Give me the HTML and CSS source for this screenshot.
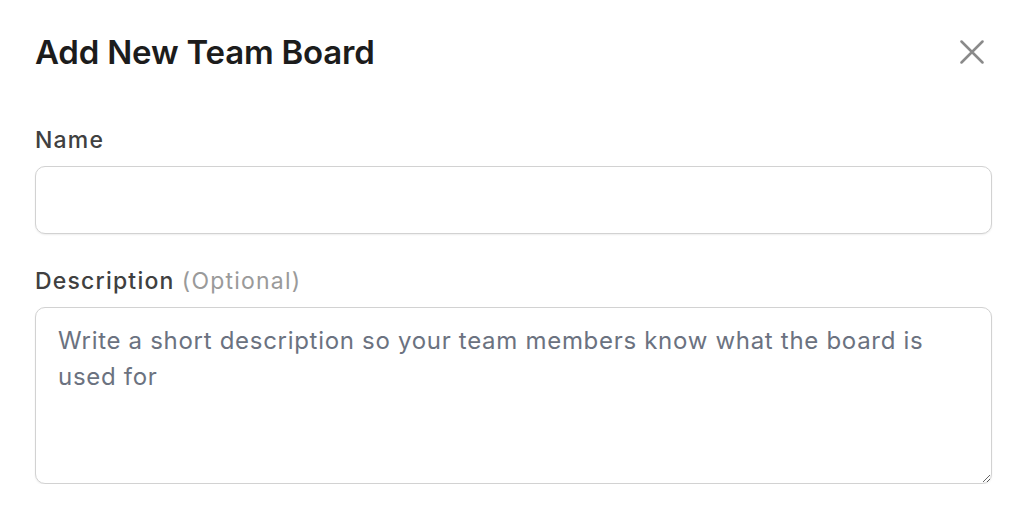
FILE: index.html
```html
<!DOCTYPE html>
<html lang="en">
<head>
<meta charset="utf-8">
<title>Add New Team Board</title>
<link rel="stylesheet" href="styles.css">
</head>
<body>
<div class="dialog">
  <div class="header">
    <h1 class="title">Add New Team Board</h1>
    <button class="close" aria-label="Close">
      <svg width="24" height="24" viewBox="0 0 24 24" fill="none" stroke="#8a8a8a" stroke-width="2.5" stroke-linecap="round"><path d="M1.5 1.5 L22.5 22.5 M22.5 1.5 L1.5 22.5"/></svg>
    </button>
  </div>
  <div class="field">
    <label class="label" for="name">Name</label>
    <input class="input" id="name" type="text">
  </div>
  <div class="field">
    <label class="label" for="desc">Description <span class="optional">(Optional)</span></label>
    <textarea class="textarea" id="desc" placeholder="Write a short description so your team members know what the board is used for"></textarea>
  </div>
</div>
</body>
</html>
```
FILE: styles.css
```css
* { box-sizing: border-box; }
html, body { margin: 0; padding: 0; background: #ffffff; }
body { font-family: Inter, "Noto Sans", sans-serif; }
.dialog {
  padding: 30px 32px 0 35px;
  display: flex;
  flex-direction: column;
}
.header {
  display: flex;
  align-items: center;
  justify-content: space-between;
  height: 44px;
}
.title {
  margin: 0;
  font-size: 33px;
  font-weight: 600;
  color: #1c1c1c;
  letter-spacing: -0.2px;
}
.close {
  border: 0;
  background: none;
  padding: 0;
  margin-right: 8px;
  width: 24px;
  height: 24px;
  display: flex;
}
.field {
  display: flex;
  flex-direction: column;
}
.header + .field { margin-top: 52px; }
.field + .field { margin-top: 33px; }
.label {
  font-size: 23px;
  font-weight: 500;
  letter-spacing: 1.2px;
  color: #404040;
  line-height: 28px;
  margin-bottom: 12px;
}
.optional { color: #9a9a9a; font-weight: 400; }
.input, .textarea {
  width: 100%;
  border: 1.5px solid #d2d2d2;
  border-radius: 10px;
  font-family: inherit;
  font-size: 24px;
  letter-spacing: 0.7px;
  background: #fff;
  box-shadow: 0 1px 2px rgba(0,0,0,0.07);
  outline: none;
}
.input { height: 68px; padding: 0 22px; }
.textarea {
  height: 177px;
  padding: 15px 22px;
  line-height: 36px;
  resize: vertical;
  display: block;
}
.textarea::placeholder { color: #6b7280; opacity: 1; }
```
